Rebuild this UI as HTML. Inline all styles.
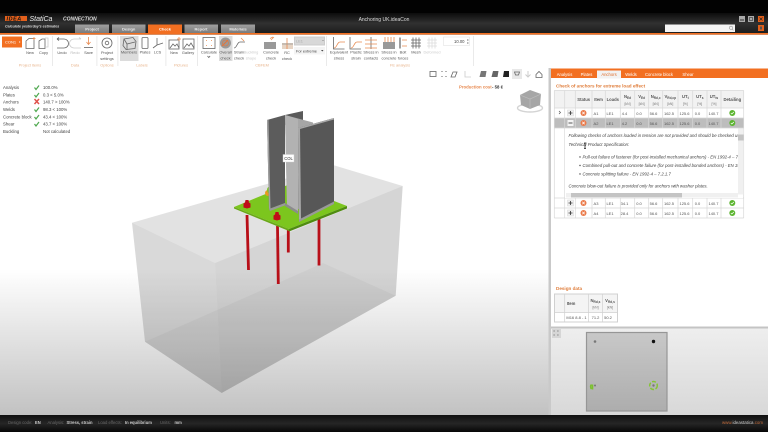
<!DOCTYPE html>
<html><head><meta charset="utf-8"><style>
html,body{margin:0;padding:0;background:#000;width:768px;height:432px;overflow:hidden}
svg{display:block;filter:blur(.35px)}
text{font-family:"Liberation Sans",sans-serif;font-size:4.3px;fill:#444}
.r{font-size:4px;fill:#555;text-anchor:middle}
.u{font-size:3.4px;fill:#777;text-anchor:middle}
.c{text-anchor:middle;font-size:3.9px;fill:#555}
.g{text-anchor:middle;font-size:3.9px;fill:#e8b48c}
.h{text-anchor:middle;font-size:4.2px;font-weight:bold;fill:#555}
.t{text-anchor:middle;font-size:4px;font-weight:bold;fill:#eee}
.w{font-size:4.2px;fill:#fff;text-anchor:middle}
.i{font-size:4.3px;font-style:italic;fill:#444}
.bl{font-size:4.2px;fill:#666}
.bb{font-size:4.1px;fill:#ccc;font-weight:bold}
.hd{font-size:4.6px;font-weight:bold;fill:#e07e3c}
.s{fill:none;stroke:#666;stroke-width:.8}
.o{fill:none;stroke:#e88a50;stroke-width:.8}
.f{fill:none;stroke:#ccc;stroke-width:.8}
.l{stroke:#d8d8d8;stroke-width:.7;fill:none}
</style></head><body>
<svg width="768" height="432" viewBox="0 0 768 432" xmlns="http://www.w3.org/2000/svg">
<defs>
<linearGradient id="bg" x1="0" y1="0" x2="0" y2="1"><stop offset="0" stop-color="#fff"/><stop offset=".58" stop-color="#fff"/><stop offset="1" stop-color="#c2c2c2"/></linearGradient>
<linearGradient id="bar" x1="0" y1="0" x2="0" y2="1"><stop offset="0" stop-color="#0c0c0c"/><stop offset=".5" stop-color="#303030"/><stop offset="1" stop-color="#1c1c1c"/></linearGradient>
<linearGradient id="bot" x1="0" y1="0" x2="0" y2="1"><stop offset="0" stop-color="#101010"/><stop offset=".5" stop-color="#262626"/><stop offset="1" stop-color="#060606"/></linearGradient>
<linearGradient id="low" x1="0" y1="0" x2="0" y2="1"><stop offset="0" stop-color="#eee"/><stop offset="1" stop-color="#d8d8d8"/></linearGradient>
<linearGradient id="pl" x1="0" y1="0" x2="0" y2="1"><stop offset="0" stop-color="#c8c8c8"/><stop offset="1" stop-color="#adadad"/></linearGradient>
<linearGradient id="tab" x1="0" y1="0" x2="0" y2="1"><stop offset="0" stop-color="#a0a0a0"/><stop offset="1" stop-color="#7c7c7c"/></linearGradient>
<clipPath id="dc"><rect x="565" y="128" width="173" height="65"/></clipPath>
</defs>

<!-- title -->
<rect width="768" height="13" fill="#020202"/>
<rect y="13" width="768" height="20.5" fill="url(#bar)"/>
<rect y="33" width="768" height="1.7" fill="#f26f21"/>
<rect x="5" y="16" width="22" height="5" fill="#e2601c"/>
<text x="6.5" y="20.5" style="font-size:5.4px;font-weight:bold;font-style:italic;fill:#111;letter-spacing:.6px">IDEA</text>
<text x="29.5" y="21" style="font-size:7px;font-style:italic;fill:#eee">StatiCa</text>
<text x="63" y="20.5" style="font-size:5px;font-weight:bold;font-style:italic;fill:#ddd">CONNECTION</text>
<text x="5" y="27.6" style="font-size:3.6px;font-style:italic;font-weight:bold;fill:#ddd">Calculate yesterday's estimates</text>
<text x="384" y="21" style="font-size:5px;fill:#ddd;text-anchor:middle">Anchoring UK.ideaCon</text>

<rect x="75" y="24.500" width="34" height="8.500" fill="url(#tab)"/><text class="t" x="92" y="30.400">Project</text>
<rect x="112" y="24.500" width="33.500" height="8.500" fill="url(#tab)"/><text class="t" x="128.700" y="30.400">Design</text>
<rect x="148" y="24.500" width="34" height="9" fill="#f26f21"/><text class="t" x="165" y="30.400" style="fill:#fff">Check</text>
<rect x="184.500" y="24.500" width="33.500" height="8.500" fill="url(#tab)"/><text class="t" x="201" y="30.400">Report</text>
<rect x="221" y="24.500" width="34" height="8.500" fill="url(#tab)"/><text class="t" x="238" y="30.400">Materials</text>

<rect x="665" y="24.500" width="70" height="7.500" fill="#f4f4f4"/>
<circle cx="731" cy="27.800" r="1.600" fill="none" stroke="#999" stroke-width=".6"/><path d="M732 29l1.400 1.400" stroke="#999" stroke-width=".6"/>
<rect x="739" y="16" width="6" height="6" fill="#aaa"/><rect x="740" y="19.500" width="4" height="1" fill="#333"/>
<rect x="748" y="16" width="6" height="6" fill="#aaa"/><rect x="749.500" y="17.500" width="3" height="3" fill="none" stroke="#333" stroke-width=".6"/>
<rect x="758" y="16" width="6" height="6" fill="#e2601c"/><path d="M759.500 17.500l3 3m0-3l-3 3" stroke="#222" stroke-width=".7"/>
<rect x="758" y="25" width="6" height="6" fill="#e2601c"/><rect x="760" y="26.500" width="2" height="3" fill="#555"/>

<!-- ribbon -->
<rect y="34.700" width="768" height="33.500" fill="#fff"/>
<rect x="2" y="36.500" width="20" height="11" fill="#f26f21"/>
<text x="5" y="43.500" style="font-size:4px;fill:#fff">CON1</text><path d="M19 42l1.200 0" stroke="#fff" stroke-width=".9"/>
<g fill="#e4e4e4"><rect x="52" y="36" width=".8" height="30"/><rect x="96.500" y="36" width=".8" height="30"/><rect x="117.500" y="36" width=".8" height="30"/><rect x="165.500" y="36" width=".8" height="30"/><rect x="197" y="36" width=".8" height="30"/><rect x="326" y="36" width=".8" height="30"/><rect x="473" y="36" width=".8" height="30"/></g>
<rect x="120" y="36" width="18.500" height="25" fill="#dcdcdc"/>
<rect x="219" y="36" width="13.500" height="25" fill="#dcdcdc"/>

<!-- ribbon icons -->
<path class="s" d="M26 41l3-2.500h5v10h-8z"/><path class="o" d="M34 37v3m-1.500-1.500h3"/>
<text class="c" x="30" y="54">New</text>
<path class="s" d="M39 41l3-2h3v9.500h-6z"/><path class="f" d="M45 38h3v9h-3"/><text class="c" x="43.500" y="54">Copy</text>
<path class="s" d="M57 39h7a4.500 4.500 0 0 1 0 9h-7m0-9l2-1.500m-2 1.500l2 1.500"/><text class="c" x="62" y="54">Undo</text>
<path class="f" d="M81 39h-7a4.500 4.500 0 0 0 0 9h7m0-9l-2-1.500"/><text class="c" x="75" y="54" style="fill:#bbb">Redo</text>
<path class="o" d="M88.500 37v7m-2-2l2 2.500 2-2.500"/><path class="s" d="M84 47.500h9"/><text class="c" x="88.500" y="54">Save</text>
<circle class="s" cx="107" cy="43" r="5"/><circle class="s" cx="107" cy="43" r="1.800"/><text class="c" x="107" y="54">Project</text><text class="c" x="107" y="60">settings</text>
<path class="s" d="M124 39l9-1.500 3 4-1 7-9 1-3-4z"/><path class="s" d="M124 39l3 5 8-2m-8 2v6"/><text class="c" x="129" y="53.500">Members</text>
<rect class="s" x="142" y="37.500" width="6" height="11" rx="1"/><text class="c" x="145" y="53.500">Plates</text>
<path class="s" d="M157 45v-7m0 7l-4 3m4-3l6-2"/><text class="c" x="157.500" y="53.500">LCS</text>
<rect class="s" x="169" y="40" width="10" height="9"/><path class="s" d="M170 48l3-4 2 2 2-2 2 4"/><path class="o" d="M179 37v4m-2-2h4"/><text class="c" x="174" y="54">New</text>
<rect class="s" x="183" y="39" width="11" height="10"/><path class="s" d="M184 48l3-4 2 2 2-3 3 5"/><text class="c" x="188" y="54">Gallery</text>
<rect class="s" x="203" y="37.500" width="12" height="11"/><path class="o" d="M206 40.500h1m4 0h1m-6 5h1m4 0h1"/><text class="c" x="209" y="53.500">Calculate</text><path class="s" d="M207.500 56l1.300 1.500 1.300-1.500"/>
<circle cx="225.500" cy="43" r="5.500" fill="#999"/><path d="M222 46l6-6" stroke="#e2763c" stroke-width="1.200"/><circle cx="225.500" cy="43" r="3" fill="none" stroke="#e2763c" stroke-width=".6"/>
<text class="c" x="225.500" y="53.500">Overall</text><text class="c" x="225.500" y="59.500">check</text>
<path class="s" d="M234 48c3 0 3-6 6-6h5"/><path class="o" d="M241 38l3 3"/><text class="c" x="239" y="53.500">Strain</text><text class="c" x="239" y="59.500">check</text>
<text class="c" x="251" y="53.500" style="fill:#ccc">Buckling</text><text class="c" x="251" y="59.500" style="fill:#ccc">shape</text>
<rect x="264" y="42" width="12" height="7" fill="#999"/><path d="M270 38.500l3-1.500m-2 3l3-3" stroke="#ee8c50" stroke-width=".7"/><text class="c" x="271" y="53.500">Concrete</text><text class="c" x="271" y="59.500">check</text>
<rect x="282" y="43" width="11" height="6" fill="#e6d4c4"/><path d="M287 38v11" stroke="#e88a50" stroke-width=".8"/><path d="M282 44h11" stroke="#999" stroke-width=".8"/><text class="c" x="287" y="54">RC</text><text class="c" x="287" y="60">check</text>
<rect x="294" y="36.500" width="31" height="9" fill="#ccc"/><rect x="295" y="37.500" width="29" height="7" fill="#d8d8d8"/><text x="296" y="42.500" style="font-size:3.900px;fill:#aaa">LE1</text><path d="M322 41l1-1 1 1z" fill="#888"/>
<rect x="294" y="47" width="31" height="7.500" fill="#f4f4f4"/><text x="296" y="52.500" style="font-size:3.900px;fill:#444">For extreme</text><path d="M321 50h2.500l-1.200 1.500z" fill="#444"/>
<path class="s" d="M333.500 37v12h11"/><path class="o" d="M334 48c3 0 3-6 6-6h5"/>
<text class="c" x="339" y="53.500">Equivalent</text><text class="c" x="339" y="59.500">stress</text>
<path class="s" d="M350 37v12h11"/><path class="o" d="M351 48c3 0 3-6 6-6h5"/><text class="c" x="356" y="53.500">Plastic</text><text class="c" x="356" y="59.500">strain</text>
<path class="s" d="M371 37v12"/><path class="o" d="M365 40h12m-12 4h12m-12 4h12"/><text class="c" x="371" y="53.500">Stress in</text><text class="c" x="371" y="59.500">contacts</text>
<rect x="383" y="42" width="12" height="7" fill="#999"/><path class="o" d="M385 37v5m3-5v5m3-5v5m3-5v5"/><text class="c" x="389" y="53.500">Stress in</text><text class="c" x="389" y="59.500">concrete</text>
<path d="M400 37.500v11" stroke="#888" stroke-width="1.600"/><path class="o" d="M402 40h5m-5 6h5"/><text class="c" x="403" y="53.500">Bolt</text><text class="c" x="403" y="59.500">forces</text>
<path d="M411 40h10m-10 3h10m-10 3h10M413 37.500v11m3-11v11m3-11v11" stroke="#666" stroke-width=".8" fill="none"/><text class="c" x="416" y="53.500">Mesh</text>
<path d="M427 40h10m-10 3h10m-10 3h10M429 37.500v11m3-11v11m3-11v11" stroke="#ddd" stroke-width=".8" fill="none"/><text class="c" x="432" y="53.500" style="fill:#ccc">Deformed</text>
<rect x="443.500" y="37" width="26" height="8.500" fill="#fff" stroke="#ddd" stroke-width=".5"/><text x="454" y="43" style="font-size:4.200px;fill:#444">10.00</text><path d="M467 40h1.500m-1.500 3h1.500" stroke="#444" stroke-width=".8"/>

<text class="g" x="30" y="66.500">Project items</text><text class="g" x="75" y="66.500">Data</text><text class="g" x="107" y="66.500">Options</text><text class="g" x="142" y="66.500">Labels</text><text class="g" x="181" y="66.500">Pictures</text><text class="g" x="262" y="66.500">CBFEM</text><text class="g" x="400" y="66.500">FE analysis</text>

<!-- viewport -->
<rect x="0" y="68" width="550" height="347" fill="url(#bg)"/>
<rect x="430" y="71.500" width="6" height="5" fill="none" stroke="#777" stroke-width=".9"/>
<path d="M441.500 71.500h1m3 0h1m-5 5h1m3 0h1" stroke="#666" stroke-width="1.100"/>
<path class="s" d="M451 77l2-5h4l-2 5z"/>
<path class="f" d="M465 71v6h6"/>
<path d="M481 71h5.500l-1 6h-6z" fill="#777"/><path d="M493 71h5.500l-1 6h-6z" fill="#666"/><path d="M504 71h5v6h-6z" fill="#222"/>
<rect x="512" y="69" width="10" height="10" fill="#e8e8e8"/><path class="s" d="M514.500 72h5l-1 3h-3z"/>
<path d="M528 71v6m-2.500-2.500l2.500 2.500 2.500-2.500" stroke="#ccc" fill="none"/>
<path class="s" d="M536 74.500l3-3 3 3v3h-6z"/>
<text x="459" y="88.600" style="font-size:4.300px;font-weight:bold;fill:#e88a50">Production cost</text><text x="492" y="88.600" style="font-size:4.300px;font-weight:bold;fill:#333">- 58 €</text>
<ellipse cx="530" cy="108" rx="12.500" ry="4" fill="none" stroke="#d4d4d4" stroke-width="1.400"/>
<path d="M520 95l10-5 11 4-1 11-10 4-9-4z" fill="#a6a6a6"/><path d="M520 95l10 4 11-5m-11 5v10" stroke="#c0c0c0" stroke-width=".6" fill="none"/>

<!-- status -->
<text x="3" y="89">Analysis</text><text x="43" y="89">100.0%</text>
<text x="3" y="96.400">Plates</text><text x="43" y="96.400">0.3 &lt; 5.0%</text>
<text x="3" y="103.700">Anchors</text><text x="43" y="103.700">140.7 &gt; 100%</text>
<text x="3" y="111">Welds</text><text x="43" y="111">98.3 &lt; 100%</text>
<text x="3" y="118.400">Concrete block</text><text x="43" y="118.400">43.4 &lt; 100%</text>
<text x="3" y="125.700">Shear</text><text x="43" y="125.700">43.7 &lt; 100%</text>
<text x="3" y="133">Buckling</text><text x="43" y="133">Not calculated</text>
<path d="M34.500 87.500l1.500 2 3-4M34.500 95l1.500 2 3-4M34.500 109.500l1.500 2 3-4M34.500 117l1.500 2 3-4M34.500 124l1.500 2 3-4" fill="none" stroke="#4fa84f" stroke-width="1.200"/>
<path d="M34.500 99l4.500 5m0-5l-4.500 5" stroke="#e0524c" stroke-width="1.500"/>

<!-- concrete block -->
<polygon points="132,222.700 333,165 402.700,186 215,263" fill="#000" opacity=".115"/>
<polygon points="132,222.700 215,263 221.700,393 145,341.700" fill="#000" opacity=".15"/>
<polygon points="215,263 402.700,186 395.700,295.700 221.700,393" fill="#000" opacity=".165"/>
<polygon points="145,341.700 217,310 323,263 395.700,295.700 221.700,393" fill="#000" opacity=".03"/>

<!-- rods -->
<path d="M247 215l1.500 55" stroke="#b80f18" stroke-width="2.800"/>
<path d="M288.300 230v22.500" stroke="#b80f18" stroke-width="2.800"/>
<path d="M319 218v47.500" stroke="#b80f18" stroke-width="2.800"/>
<path d="M277.500 226l.8 58" stroke="#b80f18" stroke-width="2.800"/>
<!-- plate -->
<polygon points="234,207 290,184 347,206 289,229" fill="#7cc61e"/>
<polygon points="234,207 289,229 289,231 234,208.500" fill="#6aa818"/>
<polygon points="289,229 347,206 347,208.500 289,231.500" fill="#4f8c10"/>
<circle cx="268" cy="193" r="3" fill="#e89a20"/><circle cx="271" cy="190" r="4" fill="#7cc61e"/>
<!-- bolts -->
<path d="M243.500 207.500v-4l1.500-1 .5-2.500h3l.5 2.500 1.500 1v4l-3.500 1z" fill="#c00d18"/><path d="M273.500 219.500v-4l1.500-1 .5-2.500h3l.5 2.500 1.500 1v4l-3.500 1z" fill="#c00d18"/>
<!-- column -->
<polygon points="285,115 303,111 303,120 285,125" fill="#5a5a5a"/>
<polygon points="285,115 313,122.500 313,214 287,205" fill="#a6a6a6"/>
<polygon points="285,115 298,119 298,213 287,205" fill="#b2b2b2"/>
<polygon points="267,120 285,115 285,203 269,209" fill="#5c5c5c"/>
<polygon points="267,120 268.500,119.500 270.500,208.500 269,209" fill="#a0a0a0"/>
<polygon points="269,209 285,203 286,205 270,211" fill="#999"/>
<polygon points="285,203 298,211 298,214 285,206" fill="#8c8c8c"/>
<polygon points="298,128 334,118 334,203 299,221" fill="#575757"/>
<polygon points="298,128 300,127.500 301,220 299,221" fill="#a8a8a8"/>
<polygon points="298,128 334,118 334,119.500 300,129" fill="#a8a8a8"/>
<polygon points="299,219.500 334,201.500 334,204 299,222" fill="#999"/>
<rect x="283" y="154.500" width="11" height="7.500" fill="#fff" stroke="#ccc" stroke-width=".4"/>
<text x="288.500" y="160" style="font-size:4.200px;fill:#333;text-anchor:middle">COL</text>

<!-- right panel -->
<rect x="548.500" y="68" width="2.500" height="347" fill="#c9c9c9"/>
<rect x="551" y="68" width="217" height="259" fill="#fff"/>
<rect x="551" y="68.500" width="217" height="9.500" fill="#f26f21"/>
<rect x="597" y="70.500" width="24" height="8" fill="#f2f2f2"/>
<text class="w" x="564.500" y="75.800">Analysis</text><text class="w" x="586.500" y="75.800">Plates</text><text class="w" x="609" y="75.800" style="fill:#e07030">Anchors</text><text class="w" x="631" y="75.800">Welds</text><text class="w" x="659" y="75.800">Concrete block</text><text class="w" x="688" y="75.800">Shear</text>
<text class="hd" x="556" y="87.500">Check of anchors for extreme load effect</text>

<!-- table -->
<rect x="554.300" y="90.500" width="189.400" height="17.500" fill="#f2f2f2"/>
<rect x="554.300" y="118" width="189.400" height="10" fill="#bdbdbd"/>
<text class="h" x="583.700" y="101">Status</text><text class="h" x="598.500" y="101">Item</text><text class="h" x="612.800" y="101">Loads</text>
<text class="h" x="627.500" y="98">N<tspan style="font-size:3.200px" dy="1">Ed</tspan></text><text class="h" x="641.700" y="98">V<tspan style="font-size:3.200px" dy="1">Ed</tspan></text>
<text class="h" x="655.700" y="98">N<tspan style="font-size:3.200px" dy="1">Rd,c</tspan></text><text class="h" x="670.300" y="98">V<tspan style="font-size:3.200px" dy="1">Rd,cp</tspan></text>
<text class="h" x="685.300" y="98">UT<tspan style="font-size:3.200px" dy="1">t</tspan></text><text class="h" x="699.800" y="98">UT<tspan style="font-size:3.200px" dy="1">s</tspan></text><text class="h" x="714" y="98">UT<tspan style="font-size:3.200px" dy="1">ts</tspan></text>
<text class="h" x="732.300" y="101">Detailing</text>
<text x="627.500" y="105" class="u">[kN]</text><text x="641.700" y="105" class="u">[kN]</text><text x="655.700" y="105" class="u">[kN]</text><text x="670.300" y="105" class="u">[kN]</text><text x="685.300" y="105" class="u">[%]</text><text x="699.800" y="105" class="u">[%]</text><text x="714" y="105" class="u">[%]</text>

<text class="r" x="596" y="115">A1</text><text class="r" x="610" y="115">LE1</text><text class="r" x="624.500" y="115">4.4</text><text class="r" x="639" y="115">0.0</text><text class="r" x="653.500" y="115">56.6</text><text class="r" x="669" y="115">162.5</text><text class="r" x="684.500" y="115">125.6</text><text class="r" x="697.500" y="115">0.0</text><text class="r" x="713.500" y="115">140.7</text>
<text class="r" x="596" y="125">A2</text><text class="r" x="610" y="125">LE1</text><text class="r" x="624.500" y="125">4.2</text><text class="r" x="639" y="125">0.0</text><text class="r" x="653.500" y="125">56.6</text><text class="r" x="669" y="125">162.5</text><text class="r" x="684.500" y="125">125.6</text><text class="r" x="697.500" y="125">0.0</text><text class="r" x="713.500" y="125">140.7</text>
<text class="r" x="596" y="205">A3</text><text class="r" x="610" y="205">LE1</text><text class="r" x="624.500" y="205">34.1</text><text class="r" x="639" y="205">0.0</text><text class="r" x="653.500" y="205">56.6</text><text class="r" x="669" y="205">162.5</text><text class="r" x="684.500" y="205">125.6</text><text class="r" x="697.500" y="205">0.0</text><text class="r" x="713.500" y="205">140.7</text>
<text class="r" x="596" y="215">A4</text><text class="r" x="610" y="215">LE1</text><text class="r" x="624.500" y="215">28.4</text><text class="r" x="639" y="215">0.0</text><text class="r" x="653.500" y="215">56.6</text><text class="r" x="669" y="215">162.5</text><text class="r" x="684.500" y="215">125.6</text><text class="r" x="697.500" y="215">0.0</text><text class="r" x="713.500" y="215">140.7</text>
<!-- grid -->
<path class="l" d="M554.300 90.500h189.400M554.300 108h189.400M554.300 118h189.400M554.300 128h189.400M554.300 198h189.400M554.300 208h189.400M554.300 218h189.400M554.300 90.500V218M743.700 90.500V218M564.700 90.500V218M575.300 90.500V128M592 90.500V128M605.300 90.500V128M620.300 90.500V128M634.700 90.500V128M648.700 90.500V128M662.700 90.500V128M678 90.500V128M692.700 90.500V128M707 90.500V128M721 90.500V128M575.300 198V218M592 198V218M605.300 198V218M620.300 198V218M634.700 198V218M648.700 198V218M662.700 198V218M678 198V218M692.700 198V218M707 198V218M721 198V218"/>
<path d="M559 111l1.500 1.500-1.500 1.500" fill="none" stroke="#555" stroke-width=".7"/>
<rect x="567.500" y="110" width="6" height="6" fill="#f0f0f0" stroke="#ccc" stroke-width=".4"/><path d="M568.500 113h4m-2-2v4" stroke="#333" stroke-width=".8"/>
<rect x="567.500" y="120" width="6" height="6" fill="#f4f4f4"/><path d="M568.500 123h4" stroke="#333" stroke-width=".8"/>
<rect x="567.500" y="200" width="6" height="6" fill="#f0f0f0" stroke="#ccc" stroke-width=".4"/><path d="M568.500 203h4m-2-2v4" stroke="#333" stroke-width=".8"/>
<rect x="567.500" y="210" width="6" height="6" fill="#f0f0f0" stroke="#ccc" stroke-width=".4"/><path d="M568.500 213h4m-2-2v4" stroke="#333" stroke-width=".8"/>
<g fill="#ea7a4a"><circle cx="583.500" cy="113" r="3"/><circle cx="583.500" cy="123" r="3"/><circle cx="583.500" cy="203" r="3"/><circle cx="583.500" cy="213" r="3"/></g>
<path d="M582.300 111.800l2.400 2.400m0-2.400l-2.400 2.400M582.300 121.800l2.400 2.400m0-2.400l-2.400 2.400M582.300 201.800l2.400 2.400m0-2.400l-2.400 2.400M582.300 211.800l2.400 2.400m0-2.400l-2.400 2.400" stroke="#fff" stroke-width=".7"/>
<g fill="#5cb531"><circle cx="732.300" cy="113" r="3"/><circle cx="732.300" cy="123" r="3"/><circle cx="732.300" cy="203" r="3"/><circle cx="732.300" cy="213" r="3"/></g>
<path d="M730.800 113l1.100 1 1.900-2M730.800 123l1.100 1 1.900-2M730.800 203l1.100 1 1.900-2M730.800 213l1.100 1 1.900-2" fill="none" stroke="#fff" stroke-width=".7"/>

<!-- detail -->
<rect x="565" y="128.500" width="178" height="69.500" fill="#fff"/>
<g clip-path="url(#dc)">
<text class="i" x="568.500" y="137">Following checks of anchors loaded in tension are not provided and should be checked using European Technical Product Specification</text>
<text class="i" x="568.500" y="146">Technical Product Specification:</text>
<text class="i" x="582.500" y="158.500">Pull-out failure of fastener (for post-installed mechanical anchors) - EN 1992-4 – 7.2.1.5</text>
<text class="i" x="582.500" y="167">Combined pull-out and concrete failure (for post-installed bonded anchors) - EN 1992-4</text>
<text class="i" x="582.500" y="175.500">Concrete splitting failure - EN 1992-4 – 7.2.1.7</text>
<text class="i" x="568.500" y="187.500">Concrete blow-out failure is provided only for anchors with washer plates.</text>
<g fill="#444"><circle cx="580" cy="157" r=".7"/><circle cx="580" cy="165.500" r=".7"/><circle cx="580" cy="174" r=".7"/></g>
</g>
<rect x="738" y="128.500" width="5.700" height="66" fill="#f0f0f0"/><rect x="738" y="134.500" width="5.700" height="6" fill="#c4c4c4"/>
<rect x="566" y="193" width="172" height="4.500" fill="#f0f0f0"/><rect x="571" y="193" width="111" height="4.500" fill="#c4c4c4"/>
<path d="M585 143v5.500m-1-5.500h2m-2 5.500h2" stroke="#222" stroke-width=".8" fill="none"/>

<!-- design data -->
<text class="hd" x="556" y="289.800">Design data</text>
<rect x="554.500" y="294" width="63" height="28" fill="#f4f4f4" stroke="#d0d0d0"/>
<rect x="555" y="312.500" width="62" height="9" fill="#fff"/>
<path d="M554.500 312.500h63M564.700 294v28M588.500 294v28M602.500 294v28" stroke="#d0d0d0" stroke-width=".7" fill="none"/>
<text class="h" x="571" y="305">Item</text>
<text class="h" x="595.500" y="302">N<tspan style="font-size:3.200px" dy="1">Rd,s</tspan></text><text class="h" x="610" y="302">V<tspan style="font-size:3.200px" dy="1">Rd,s</tspan></text>
<text class="u" x="595.500" y="308.500">[kN]</text><text class="u" x="610" y="308.500">[kN]</text>
<text class="r" x="576.500" y="319">M16 8.8 - 1</text><text class="r" x="595.500" y="319">71.2</text><text class="r" x="608" y="319">50.2</text>

<!-- lower -->
<rect x="551" y="326.500" width="217" height="2" fill="#c4c4c4"/>
<rect x="551" y="328.500" width="217" height="86.500" fill="url(#low)"/>
<rect x="552" y="329" width="9" height="9" fill="#d6d6d6"/>
<path d="M553.500 331h1.200m2.600 0h1.200m-5 4h1.200m2.600 0h1.200" stroke="#777" stroke-width=".9"/>
<rect x="586.500" y="332.500" width="80.500" height="78.500" fill="url(#pl)" stroke="#969696" stroke-width="1.200"/>
<circle cx="595" cy="341.500" r="1.300" fill="#777"/>
<circle cx="653.500" cy="341.500" r="1.700" fill="#111"/>
<path d="M591.500 384.500a2.500 3 0 0 0 0 4.500M592.500 384.500v5" fill="none" stroke="#7cc030" stroke-width="1.600"/><circle cx="595" cy="385.500" r="1" fill="#777"/>
<ellipse cx="653.500" cy="385.500" rx="3.800" ry="4" fill="none" stroke="#86c436" stroke-width="1.500" stroke-dasharray="4 1.600"/><circle cx="653.500" cy="385.500" r="1.200" fill="#777"/>

<!-- bottom -->
<rect y="415" width="768" height="17" fill="url(#bot)"/>
<text class="bl" x="8" y="424">Design code:</text><text class="bb" x="35" y="424">EN</text>
<text class="bl" x="47.500" y="424">Analysis:</text><text class="bb" x="66.500" y="424">Stress, strain</text>
<text class="bl" x="98" y="424">Load effects:</text><text class="bb" x="125" y="424">In equilibrium</text>
<text class="bl" x="160" y="424">Units:</text><text class="bb" x="174.500" y="424">mm</text>
<text x="763" y="424" style="font-size:4.400px;text-anchor:end;fill:#c06a3a">www.<tspan style="fill:#ccc">ideastatica</tspan>.com</text>
</svg>
</body></html>
